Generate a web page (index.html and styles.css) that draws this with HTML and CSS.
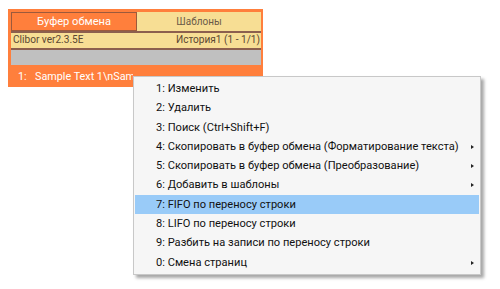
FILE: index.html
```html
<!DOCTYPE html>
<html>
<head>
<meta charset="utf-8">
<link rel="stylesheet" href="styles.css">
</head>
<body>
<div class="window">
  <div class="tabs">
    <div class="tab tab-active">Буфер обмена</div>
    <div class="tab tab-other">Шаблоны</div>
  </div>
  <div class="sep"></div>
  <div class="info">
    <span class="ver">Clibor ver2.3.5E</span>
    <span class="hist">История1 (1 - 1/1)</span>
  </div>
  <div class="sep"></div>
  <div class="gray"></div>
  <div class="entry"><span class="num">1:</span><span class="etext">Sample Text 1\nSample Text 2\nSample Text 3</span></div>
</div>

<div class="menu">
  <div class="item">1: Изменить</div>
  <div class="item">2: Удалить</div>
  <div class="item">3: Поиск (Ctrl+Shift+F)</div>
  <div class="item sub">4: Скопировать в буфер обмена (Форматирование текста)</div>
  <div class="item sub">5: Скопировать в буфер обмена (Преобразование)</div>
  <div class="item sub">6: Добавить в шаблоны</div>
  <div class="item hl">7: FIFO по переносу строки</div>
  <div class="item">8: LIFO по переносу строки</div>
  <div class="item">9: Разбить на записи по переносу строки</div>
  <div class="item sub">0: Смена страниц</div>
</div>
</body>
</html>
```
FILE: styles.css
```css
html, body {
  margin: 0;
  padding: 0;
  background: #ffffff;
}
body {
  font-family: Roboto, "Noto Sans", sans-serif;
  font-size: 11px;
  position: relative;
  width: 500px;
  height: 289px;
  overflow: hidden;
}
.window {
  margin-left: 8px;
  margin-top: 9px;
  width: 250px;
  padding: 3px 2px 0 3px;
  background: #ff7f3c;
  display: flex;
  flex-direction: column;
}
.tabs {
  display: flex;
  height: 19px;
}
.tab {
  display: flex;
  align-items: center;
  justify-content: center;
  line-height: 1;
}
.tab-active {
  width: 124px;
  background: #ff7f3c;
  border: 1px solid #9c5a3c;
  color: #ffffff;
  font-size: 11.1px;
}
.tab-other {
  flex: 1;
  background: #f7de94;
  color: #6b5a48;
  font-size: 10px;
}
.sep {
  height: 2px;
  background: #8c5f4e;
}
.info {
  height: 15px;
  background: #f7de94;
  color: #5a4632;
  display: flex;
  align-items: center;
  justify-content: space-between;
  padding: 0 1px 0 2px;
  line-height: 1;
  font-size: 10.1px;
}
.gray {
  height: 15px;
  background: #c0c0c0;
}
.entry {
  height: 20px;
  padding-top: 2px;
  display: flex;
  align-items: center;
  color: #ffffff;
  padding-left: 7px;
  white-space: nowrap;
  line-height: 1;
  font-size: 10.8px;
}
.num {
  width: 17px;
  flex-shrink: 0;
}
.etext {
  width: 98px;
  flex-shrink: 0;
  overflow: hidden;
}
.menu {
  position: absolute;
  left: 133px;
  top: 76px;
  width: 344px;
  padding: 2px 1px;
  background: #f6f6f6;
  border: 1px solid #c8c8c8;
  box-shadow: 3px 3px 3px rgba(0, 0, 0, 0.35);
  color: #111111;
  font-size: 11.1px;
}
.item {
  position: relative;
  height: 19.3px;
  line-height: 19.3px;
  padding-left: 21px;
  white-space: nowrap;
}
.item.hl {
  background: #99cbf8;
}
.item.sub::after {
  content: "";
  position: absolute;
  right: 5px;
  top: 8px;
  border-left: 3px solid #222222;
  border-top: 2px solid transparent;
  border-bottom: 2px solid transparent;
}
```
